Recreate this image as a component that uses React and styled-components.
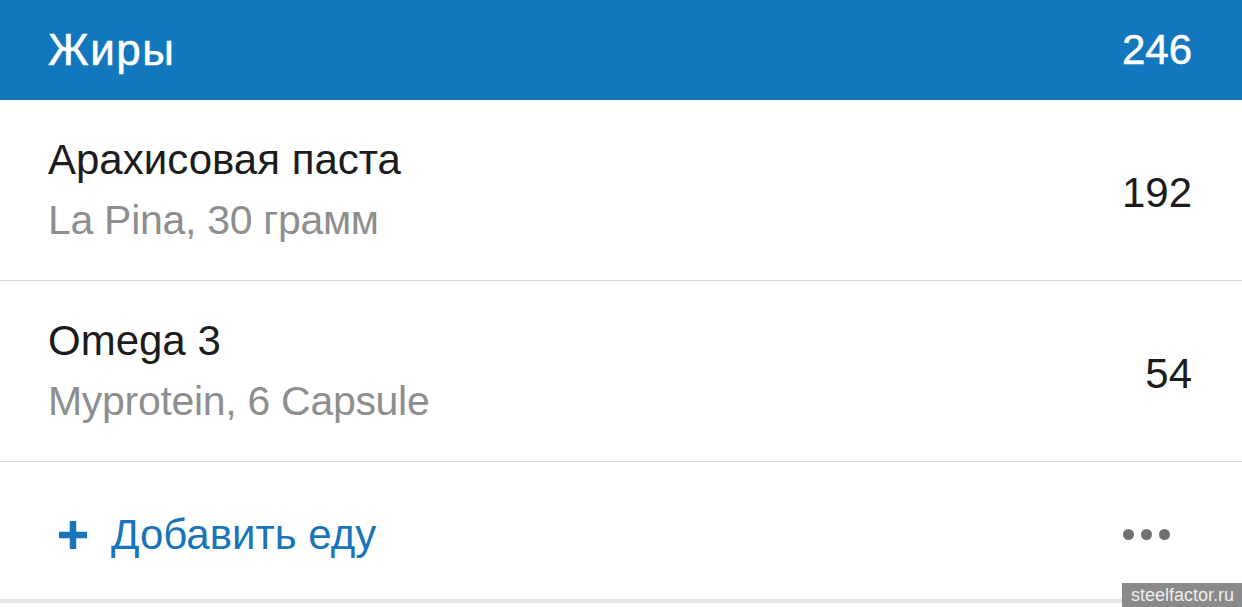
import React from "react";
import styled, { createGlobalStyle } from "styled-components";

const GlobalStyle = createGlobalStyle`
  html, body {
    margin: 0;
    padding: 0;
    background: #ffffff;
    font-family: "Liberation Sans", Arial, sans-serif;
  }
`;

const Page = styled.div`
  position: relative;
  width: 1242px;
  height: 607px;
  overflow: hidden;
  background: #ffffff;
`;

const Header = styled.div`
  height: 100px;
  box-sizing: border-box;
  padding: 0 50px 0 48px;
  display: flex;
  align-items: center;
  justify-content: space-between;
  background: #1277bd;
  color: #ffffff;
  font-size: 42px;
  -webkit-text-stroke: 0.5px #ffffff;
`;

const HeaderTitle = styled.span`
  font-size: 44px;
  letter-spacing: 1.5px;
`;

const Row = styled.div`
  height: 180px;
  box-sizing: content-box;
  padding: 0 50px 0 48px;
  display: flex;
  align-items: center;
  justify-content: space-between;
  border-bottom: 1px solid #dadada;
`;

const Info = styled.div`
  display: flex;
  flex-direction: column;
`;

const Name = styled.span`
  font-size: 42px;
  line-height: 60px;
  color: #1c1c1c;
`;

const Sub = styled.span`
  font-size: 41px;
  line-height: 60px;
  color: #8e8e8e;
  letter-spacing: -0.3px;
`;

const Amount = styled.span`
  font-size: 42px;
  color: #1c1c1c;
  margin-top: 6px;
`;

const Footer = styled.div`
  height: 141px;
  box-sizing: border-box;
  padding: 8px 72px 0 59px;
  display: flex;
  align-items: center;
  justify-content: space-between;
  border-bottom: 4px solid #e6e6e6;
`;

const AddButton = styled.div`
  display: flex;
  align-items: center;
  gap: 24px;
  color: #1a74b9;
  font-size: 42px;
`;

const Dots = styled.div`
  display: flex;
  gap: 7px;
  margin-top: -1px;
`;

const Dot = styled.span`
  width: 11px;
  height: 11px;
  border-radius: 50%;
  background: #707070;
`;

const Watermark = styled.div`
  position: absolute;
  right: 0;
  bottom: 0;
  padding: 0 8px 0 9px;
  height: 24px;
  display: flex;
  align-items: center;
  background: #8a8a8a;
  color: #eeeeee;
  font-size: 18px;
`;

const PlusIcon = () => (
  <svg width="28" height="28" viewBox="0 0 28 28">
    <rect x="10.75" y="0" width="6.5" height="28" fill="#1a74b9" />
    <rect x="0" y="10.75" width="28" height="6.5" fill="#1a74b9" />
  </svg>
);

const items = [
  { name: "Арахисовая паста", sub: "La Pina, 30 грамм", amount: 192 },
  { name: "Omega 3", sub: "Myprotein, 6 Capsule", amount: 54 },
];

const App = () => {
  return (
    <Page>
      <GlobalStyle />
      <Header>
        <HeaderTitle>Жиры</HeaderTitle>
        <span>246</span>
      </Header>
      {items.map((item) => (
        <Row key={item.name}>
          <Info>
            <Name>{item.name}</Name>
            <Sub>{item.sub}</Sub>
          </Info>
          <Amount>{item.amount}</Amount>
        </Row>
      ))}
      <Footer>
        <AddButton>
          <PlusIcon />
          <span>Добавить еду</span>
        </AddButton>
        <Dots>
          <Dot />
          <Dot />
          <Dot />
        </Dots>
      </Footer>
      <Watermark>steelfactor.ru</Watermark>
    </Page>
  );
};

export default App;
